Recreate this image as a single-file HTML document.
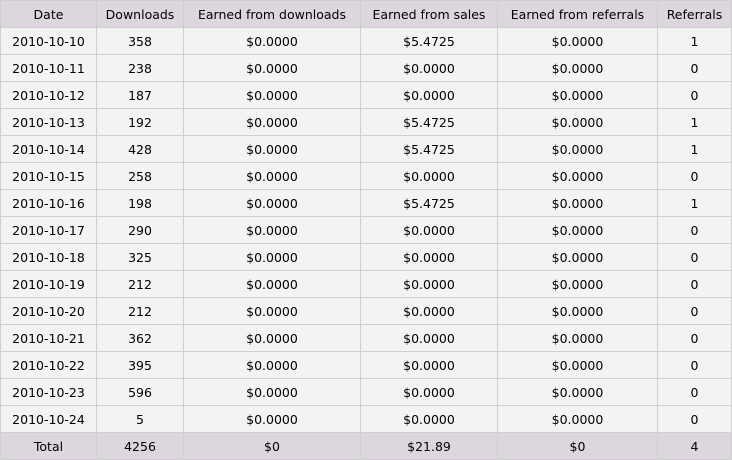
<!DOCTYPE html>
<html><head><meta charset="utf-8"><style>
body{margin:0;background:#fff;}
table{border-collapse:collapse;width:731px;table-layout:fixed;font-family:"DejaVu Sans","Liberation Sans",sans-serif;font-size:12.5px;color:#000;}
td,th{border:1px solid #cfcfcf;height:26px;padding:0;text-align:center;font-weight:normal;background:#f3f3f3;}
th,tr.t td{background:#ddd6de;}
</style></head><body>
<table>
<colgroup><col style="width:96px"><col style="width:87px"><col style="width:177px"><col style="width:137px"><col style="width:160px"><col style="width:74px"></colgroup>
<tr><th>Date</th><th>Downloads</th><th>Earned from downloads</th><th>Earned from sales</th><th>Earned from referrals</th><th>Referrals</th></tr>
<tr><td>2010-10-10</td><td>358</td><td>$0.0000</td><td>$5.4725</td><td>$0.0000</td><td>1</td></tr>
<tr><td>2010-10-11</td><td>238</td><td>$0.0000</td><td>$0.0000</td><td>$0.0000</td><td>0</td></tr>
<tr><td>2010-10-12</td><td>187</td><td>$0.0000</td><td>$0.0000</td><td>$0.0000</td><td>0</td></tr>
<tr><td>2010-10-13</td><td>192</td><td>$0.0000</td><td>$5.4725</td><td>$0.0000</td><td>1</td></tr>
<tr><td>2010-10-14</td><td>428</td><td>$0.0000</td><td>$5.4725</td><td>$0.0000</td><td>1</td></tr>
<tr><td>2010-10-15</td><td>258</td><td>$0.0000</td><td>$0.0000</td><td>$0.0000</td><td>0</td></tr>
<tr><td>2010-10-16</td><td>198</td><td>$0.0000</td><td>$5.4725</td><td>$0.0000</td><td>1</td></tr>
<tr><td>2010-10-17</td><td>290</td><td>$0.0000</td><td>$0.0000</td><td>$0.0000</td><td>0</td></tr>
<tr><td>2010-10-18</td><td>325</td><td>$0.0000</td><td>$0.0000</td><td>$0.0000</td><td>0</td></tr>
<tr><td>2010-10-19</td><td>212</td><td>$0.0000</td><td>$0.0000</td><td>$0.0000</td><td>0</td></tr>
<tr><td>2010-10-20</td><td>212</td><td>$0.0000</td><td>$0.0000</td><td>$0.0000</td><td>0</td></tr>
<tr><td>2010-10-21</td><td>362</td><td>$0.0000</td><td>$0.0000</td><td>$0.0000</td><td>0</td></tr>
<tr><td>2010-10-22</td><td>395</td><td>$0.0000</td><td>$0.0000</td><td>$0.0000</td><td>0</td></tr>
<tr><td>2010-10-23</td><td>596</td><td>$0.0000</td><td>$0.0000</td><td>$0.0000</td><td>0</td></tr>
<tr><td>2010-10-24</td><td>5</td><td>$0.0000</td><td>$0.0000</td><td>$0.0000</td><td>0</td></tr>
<tr class="t"><td>Total</td><td>4256</td><td>$0</td><td>$21.89</td><td>$0</td><td>4</td></tr>
</table>
</body></html>
